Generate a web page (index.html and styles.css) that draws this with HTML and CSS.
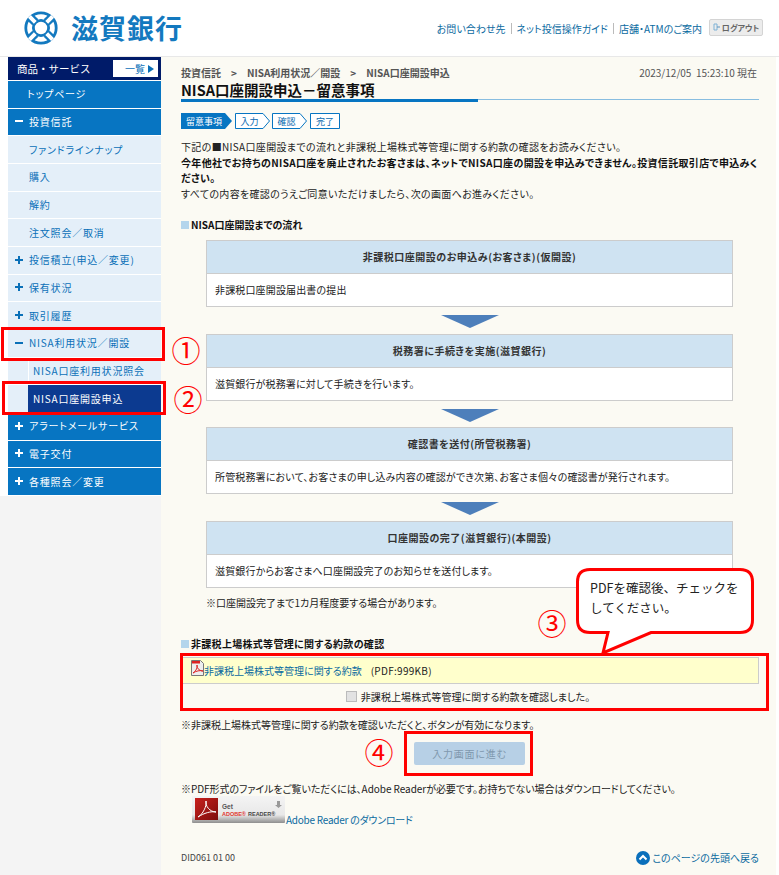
FILE: index.html
```html
<!DOCTYPE html>
<html lang="ja">
<head>
<meta charset="utf-8">
<title>NISA口座開設申込</title>
<link rel="stylesheet" href="styles.css">
</head>
<body>
<div class="page">
  <header class="top">
    <div class="logo">
      <svg class="logo-mark" viewBox="0 0 34 34" width="34" height="34">
        <circle cx="17" cy="17" r="15.2" fill="none" stroke="#1379bf" stroke-width="2.8"/>
        <circle cx="17" cy="17" r="7.6" fill="none" stroke="#1379bf" stroke-width="2.8"/>
        <g stroke="#1379bf" stroke-width="8.5">
          <path d="M11.3 11.3 6.4 6.4M22.7 11.3 27.6 6.4M11.3 22.7 6.4 27.6M22.7 22.7 27.6 27.6"/>
        </g>
        <g stroke="#fff" stroke-width="4">
          <path d="M11.3 11.3 5.4 5.4M22.7 11.3 28.6 5.4M11.3 22.7 5.4 28.6M22.7 22.7 28.6 28.6"/>
        </g>
      </svg>
      <span class="logo-text">滋賀銀行</span>
    </div>
    <nav class="top-links">
      <a>お問い合わせ先</a><i></i><a>ネット投信操作ガイド</a><i></i><a>店舗・ATMのご案内</a>
      <span class="logout">
        <svg viewBox="0 0 8 8" width="8" height="8"><path d="M1 1h3v6H1z" fill="none" stroke="#7fb2d6"/><path d="M4 4h3" stroke="#5c93bd"/></svg>
        ログアウト
      </span>
    </nav>
  </header>

  <div class="shell">
    <aside class="side">
      <nav class="menu">
        <div class="menu-head">
          <span>商品・サービス</span>
          <span class="menu-all">一覧<b class="tri"></b></span>
        </div>
        <a class="row blue indent">トップページ</a>
        <a class="row blue"><b class="sign minus"></b>投資信託</a>
        <a class="row light sub">ファンドラインナップ</a>
        <a class="row light sub">購入</a>
        <a class="row light sub">解約</a>
        <a class="row light sub">注文照会／取消</a>
        <a class="row light"><b class="sign plus"></b>投信積立(申込／変更)</a>
        <a class="row light"><b class="sign plus"></b>保有状況</a>
        <a class="row light"><b class="sign plus"></b>取引履歴</a>
        <a class="row light"><b class="sign minus"></b>NISA利用状況／開設</a>
        <a class="row light child"><span>NISA口座利用状況照会</span></a>
        <a class="row light child current"><span>NISA口座開設申込</span></a>
        <a class="row blue"><b class="sign plus"></b>アラートメールサービス</a>
        <a class="row blue"><b class="sign plus"></b>電子交付</a>
        <a class="row blue"><b class="sign plus"></b>各種照会／変更</a>
      </nav>
    </aside>

    <main class="main">
      <div class="crumbs">
        <span class="crumb-path">投資信託　&gt;　NISA利用状況／開設　&gt;　NISA口座開設申込</span>
        <span class="stamp">2023/12/05&nbsp; 15:23:10 現在</span>
      </div>
      <h1 class="title">NISA口座開設申込－留意事項</h1>
      <div class="rule"><span class="rule-thick"></span><span class="rule-thin"></span></div>

      <ol class="steps">
        <li class="step step-on step-a">
          <svg viewBox="0 0 51 16" width="51" height="16"><path d="M0 0H44L51 8 44 16H0Z" fill="#0775c2"/></svg>
          <span>留意事項</span>
        </li>
        <li class="step step-b">
          <svg viewBox="0 0 35 16" width="35" height="16"><path d="M.5.5H28L34.5 8 28 15.5H.5Z" fill="#fff" stroke="#0775c2"/></svg>
          <span>入力</span>
        </li>
        <li class="step step-b">
          <svg viewBox="0 0 35 16" width="35" height="16"><path d="M.5.5H28L34.5 8 28 15.5H.5Z" fill="#fff" stroke="#0775c2"/></svg>
          <span>確認</span>
        </li>
        <li class="step step-c">
          <svg viewBox="0 0 30 16" width="30" height="16"><path d="M.5.5H29.5V15.5H.5Z" fill="#fff" stroke="#0775c2"/></svg>
          <span>完了</span>
        </li>
      </ol>

      <p class="intro">下記の■NISA口座開設までの流れと非課税上場株式等管理に関する約款の確認をお読みください。<br>
      <strong>今年他社でお持ちのNISA口座を廃止されたお客さまは、ネットでNISA口座の開設を申込みできません。投資信託取引店で申込みく<br>ださい。</strong><br>
      すべての内容を確認のうえご同意いただけましたら、次の画面へお進みください。</p>

      <h2 class="sec sec-flow">NISA口座開設までの流れ</h2>

      <div class="flow">
        <section class="flow-box">
          <h3>非課税口座開設のお申込み(お客さま)(仮開設)</h3>
          <p>非課税口座開設届出書の提出</p>
        </section>
        <div class="flow-arrow"><b></b></div>
        <section class="flow-box">
          <h3>税務署に手続きを実施(滋賀銀行)</h3>
          <p>滋賀銀行が税務署に対して手続きを行います。</p>
        </section>
        <div class="flow-arrow"><b></b></div>
        <section class="flow-box">
          <h3>確認書を送付(所管税務署)</h3>
          <p>所管税務署において、お客さまの申し込み内容の確認ができ次第、お客さま個々の確認書が発行されます。</p>
        </section>
        <div class="flow-arrow"><b></b></div>
        <section class="flow-box">
          <h3>口座開設の完了(滋賀銀行)(本開設)</h3>
          <p>滋賀銀行からお客さまへ口座開設完了のお知らせを送付します。</p>
        </section>
        <p class="flow-note">※口座開設完了まで1カ月程度要する場合があります。</p>
      </div>

      <h2 class="sec sec-terms">非課税上場株式等管理に関する約款の確認</h2>

      <div class="terms">
        <div class="terms-link">
          <svg class="pdf" viewBox="0 0 13 16" width="13" height="16">
            <path d="M.5.5h9l3 3v12H.5z" fill="#eee" stroke="#777"/>
            <path d="M1 1h8v2.500H1z" fill="#d22"/>
            <path d="M2 13C5 11 7 7 6 5 5 7 8 11 12 11 9 10 5 11 2 13Z" fill="none" stroke="#d22"/>
          </svg>
          <a class="link">非課税上場株式等管理に関する約款</a>
          <span class="size">(PDF:999KB)</span>
        </div>
        <label class="terms-check"><b class="check"></b>非課税上場株式等管理に関する約款を確認しました。</label>
      </div>

      <p class="note note-enable">※非課税上場株式等管理に関する約款を確認いただくと、ボタンが有効になります。</p>
      <div class="action"><span class="btn">入力画面に進む</span></div>
      <p class="note note-pdf">※PDF形式のファイルをご覧いただくには、Adobe Readerが必要です。お持ちでない場合はダウンロードしてください。</p>

      <div class="adobe">
        <svg class="adobe-badge" viewBox="0 0 93 27" width="93" height="27">
          <defs>
            <linearGradient id="g" x1="0" y1="0" x2="0" y2="1"><stop offset="0" stop-color="#f4f4f4"/><stop offset=".7" stop-color="#e8e8e8"/><stop offset="1" stop-color="#8e8e8e"/></linearGradient>
            <linearGradient id="r" x1="0" y1="0" x2="1" y2="1"><stop offset="0" stop-color="#c8201c"/><stop offset="1" stop-color="#7c0d0d"/></linearGradient>
          </defs>
          <rect width="93" height="27" rx="1" fill="url(#g)"/>
          <rect x="3" y="2" width="23" height="22" fill="url(#r)"/>
          <path d="M6 21C11 18 15 10 14 5 13 10 18 16 24 16 19 15 12 17 6 21Z" fill="none" stroke="#fff"/>
          <text x="30" y="13" class="ad-get">Get</text>
          <text x="30" y="20" class="ad-a">ADOBE®</text>
          <text x="56" y="20" class="ad-r">READER®</text>
          <path d="M85 5h3v4h2l-3.500 3L83 9h2z" fill="#999"/>
        </svg>
        <a class="link">Adobe Reader のダウンロード</a>
      </div>

      <div class="foot">
        <span class="did">DID061 01 00</span>
        <a class="link to-top">
          <svg viewBox="0 0 14 14" width="14" height="14"><circle cx="7" cy="7" r="7" fill="#0a6fbb"/><path d="M3.500 8.500 7 5l3.500 3.500" fill="none" stroke="#fff" stroke-width="2"/></svg>
          このページの先頭へ戻る
        </a>
      </div>
    </main>
  </div>
</div>

<div class="mark mark-1"></div>
<div class="mark mark-2"></div>
<div class="mark mark-3"></div>
<div class="mark mark-4"></div>
<span class="num num-1">①</span>
<span class="num num-2">②</span>
<span class="num num-3">③</span>
<span class="num num-4">④</span>
<div class="callout">
  <svg viewBox="0 0 180 90" width="180" height="90">
    <path d="M14 1.500H164Q176.500 1.500 176.500 14V52Q176.500 64.500 164 64.500H75L27 85 32 64.500H14Q1.500 64.500 1.500 52V14Q1.500 1.500 14 1.500Z" fill="#fff" stroke="#f00" stroke-width="3"/>
  </svg>
  <p>PDFを確認後、チェックを<br>してください。</p>
</div>
</body>
</html>
```

FILE: styles.css
```css
* { box-sizing: border-box; }
html, body { margin: 0; padding: 0; }
body {
  width: 779px;
  height: 875px;
  overflow: hidden;
  background: #fff;
  position: relative;
  font-family: "Noto Sans CJK JP", "Noto Sans", sans-serif;
  font-size: 10px;
  color: #222;
}
a { color: inherit; text-decoration: none; }
p, h1, h2, h3, ol { margin: 0; padding: 0; }

.top {
  height: 57px;
  display: flex;
  align-items: center;
  padding: 0 16px 0 24px;
  border-bottom: 1px solid #e8e8e8;
}
.logo { display: flex; align-items: center; gap: 13px; margin-top: -1px; }
.logo-mark { display: block; }
.logo-text {
  font-size: 27px;
  font-weight: 700;
  line-height: 34px;
  letter-spacing: 1px;
  color: #1379bf;
}
.top-links {
  margin-left: auto;
  display: flex;
  align-items: center;
  color: #0b6a9f;
  font-size: 10px;
  font-feature-settings: "palt";
  padding-top: 1px;
}
.top-links i { width: 1px; height: 11px; background: #bbb; margin: 0 5px; }
.logout {
  margin-left: 7px;
  margin-top: -3px;
  width: 54px;
  height: 17px;
  display: flex;
  align-items: center;
  justify-content: center;
  gap: 1px;
  background: #ececec;
  border: 1px solid #d4d4d4;
  border-radius: 2px;
  font-size: 8px;
  font-weight: 700;
  color: #666;
}

.shell { display: flex; height: 818px; }
.side { width: 161px; background: #f4f4f4; flex: none; }
.menu { background: #fff; padding-left: 8px; height: 439px; }
.menu-head {
  height: 23px;
  margin-bottom: 1px;
  background: #001b69;
  color: #fff;
  font-size: 10.5px;
  display: flex;
  align-items: center;
  justify-content: space-between;
  padding: 0 3px 0 9px;
}
.menu-all {
  width: 45px;
  height: 17px;
  background: #fff;
  color: #0a70b8;
  font-size: 10px;
  display: flex;
  align-items: center;
  justify-content: flex-end;
  gap: 3px;
  padding-right: 4px;
}
.tri {
  width: 0;
  height: 0;
  border-left: 6px solid #0a70b8;
  border-top: 4px solid transparent;
  border-bottom: 4px solid transparent;
}
.row {
  display: flex;
  align-items: center;
  height: 26.67px;
  margin-bottom: 1px;
  padding: 0 0 1px 7px;
  font-size: 10px;
  font-feature-settings: "palt";
  letter-spacing: .8px;
}
.blue { background: #0775c2; color: #fff; }
.light { background: #e4eff9; color: #0a70b8; }
.indent { padding-left: 19px; }
.sub { padding-left: 21px; }
.sign {
  width: 8px;
  height: 8px;
  margin-right: 6px;
  flex: none;
}
.minus { background: linear-gradient(currentColor, currentColor) center / 8px 2px no-repeat; }
.plus {
  background:
    linear-gradient(currentColor, currentColor) center / 8px 2px no-repeat,
    linear-gradient(currentColor, currentColor) center / 2px 8px no-repeat;
}
.child { padding: 0 0 0 20px; }
.child span {
  align-self: stretch;
  flex: 1;
  display: flex;
  align-items: center;
  padding: 0 0 1px 4px;
  border-left: 1px solid #fff;
}
.current span { background: #0c3a90; color: #fff; border-left: 0; padding-left: 5px; }

.main {
  flex: 1;
  min-width: 0;
  margin-right: 3px;
  padding: 0 17px 0 20px;
  background: #fbfaf3;
  font-feature-settings: "palt";
}
.crumbs {
  display: flex;
  justify-content: space-between;
  padding-top: 9px;
  height: 23px;
  line-height: 14px;
  color: #555;
}
.crumb-path { font-weight: 700; }
.stamp { padding-right: 2px; }
.title {
  height: 19px;
  font-size: 14.5px;
  line-height: 19px;
  font-weight: 700;
  color: #111;
}
.rule { display: flex; align-items: flex-start; height: 3px; }
.rule-thick { width: 297px; height: 3px; background: #0775c2; }
.rule-thin { flex: 1; height: 1px; background: #88bde0; }

.steps {
  list-style: none;
  display: flex;
  height: 16px;
  margin-top: 11px;
}
.step {
  position: relative;
  height: 16px;
  display: flex;
  align-items: center;
  justify-content: center;
  font-size: 9px;
  color: #0a6ab0;
}
.step svg { position: absolute; left: 0; top: 0; }
.step span { position: relative; }
.step-a { width: 51px; margin-right: 3px; color: #fff; padding-right: 5px; }
.step-b { width: 35px; margin-right: 2px; padding-right: 6px; }
.step-b + .step-c { margin-left: 1px; }
.step-c { width: 30px; }

.intro { margin-top: 10px; line-height: 15.5px; color: #222; white-space: nowrap; letter-spacing: .33px; }
.intro strong { color: #111; }

.sec {
  position: relative;
  height: 14px;
  line-height: 14px;
  padding-left: 10px;
  font-size: 10px;
  font-weight: 700;
  color: #111;
}
.sec::before {
  content: "";
  position: absolute;
  left: 0;
  top: 3px;
  width: 8px;
  height: 8px;
  background: #b4d5ec;
}
.sec-flow { margin-top: 17px; }
.sec-terms { margin-top: 27px; letter-spacing: .3px; }

.flow { margin: 8px 26px 0 25px; }
.flow-box { height: 67px; border: 1px solid #ccc; background: #fff; }
.flow-box h3 {
  height: 33px;
  line-height: 32px;
  background: #cfe3f2;
  border-bottom: 1px solid #ccc;
  text-align: center;
  font-size: 10px;
  font-weight: 700;
  letter-spacing: .5px;
  color: #333;
}
.flow-box p { height: 32px; line-height: 32px; padding-left: 8px; color: #222; letter-spacing: .15px; }
.flow-arrow { height: 26.5px; padding-top: 8px; display: flex; justify-content: center; }
.flow-arrow b {
  width: 0;
  height: 0;
  border-left: 29px solid transparent;
  border-right: 29px solid transparent;
  border-top: 13px solid #4d7fbb;
}
.flow-note { margin-top: 8px; line-height: 14px; }

.terms { margin-top: 6px; height: 53px; }
.terms-link {
  height: 27px;
  display: flex;
  align-items: center;
  padding-left: 9px;
  background: #ffc;
  border: 1px solid #ccc;
}
.pdf { margin-bottom: 4px; flex: none; }
.link { color: #0b6a9f; }
.size { margin-left: 9px; letter-spacing: .3px; }
.terms-check {
  height: 26px;
  display: flex;
  align-items: center;
  justify-content: center;
  gap: 4px;
  padding-right: 4px;
  letter-spacing: .08px;
}
.check {
  width: 11px;
  height: 11px;
  background: #e2e2e2;
  border: 1px solid #bbb;
}

.note { line-height: 14px; }
.note-enable { margin-top: 8px; }
.action { display: flex; justify-content: center; margin-top: 10px; padding-right: 1px; }
.btn {
  width: 111px;
  height: 23px;
  border-radius: 2px;
  background: #b7d0e6;
  color: #7f98ae;
  font-size: 10px;
  line-height: 23px;
  text-align: center;
  letter-spacing: .8px;
}
.note-pdf { margin-top: 17px; letter-spacing: -.05px; }

.adobe { display: flex; align-items: flex-end; height: 31px; padding-left: 11px; }
.adobe-badge { align-self: flex-start; flex: none; }
.adobe .link { line-height: 14px; margin-left: 1px; letter-spacing: -.25px; }
.ad-get { font: 700 6.500px "Liberation Sans", sans-serif; fill: #555; }
.ad-a { font: 700 5.500px "Liberation Sans", sans-serif; fill: #e0352f; }
.ad-r { font: 700 5.500px "Liberation Sans", sans-serif; fill: #444; }

.foot {
  display: flex;
  justify-content: space-between;
  align-items: center;
  height: 14px;
  margin-top: 24px;
}
.did { font-size: 9px; color: #444; }
.to-top { display: flex; align-items: center; gap: 2px; }

.mark { position: absolute; border: 3px solid #f00; }
.mark-1 { left: 1px; top: 327px; width: 164px; height: 34px; }
.mark-2 { left: 2px; top: 381px; width: 164px; height: 34px; }
.mark-3 { left: 180px; top: 653px; width: 589px; height: 58px; }
.mark-4 { left: 404px; top: 731px; width: 129px; height: 45px; }

.num {
  position: absolute;
  width: 30px;
  text-align: center;
  font-size: 29px;
  line-height: 30px;
  color: #f00;
}
.num-1 { left: 171px; top: 334px; }
.num-2 { left: 173px; top: 383px; }
.num-3 { left: 537px; top: 607px; }
.num-4 { left: 364px; top: 736px; }

.callout { position: absolute; left: 576px; top: 568px; width: 180px; height: 90px; }
.callout svg { display: block; }
.callout p {
  position: absolute;
  left: 14px;
  top: 10px;
  font-size: 12.500px;
  line-height: 20px;
  color: #222;
  white-space: nowrap;
}
```
